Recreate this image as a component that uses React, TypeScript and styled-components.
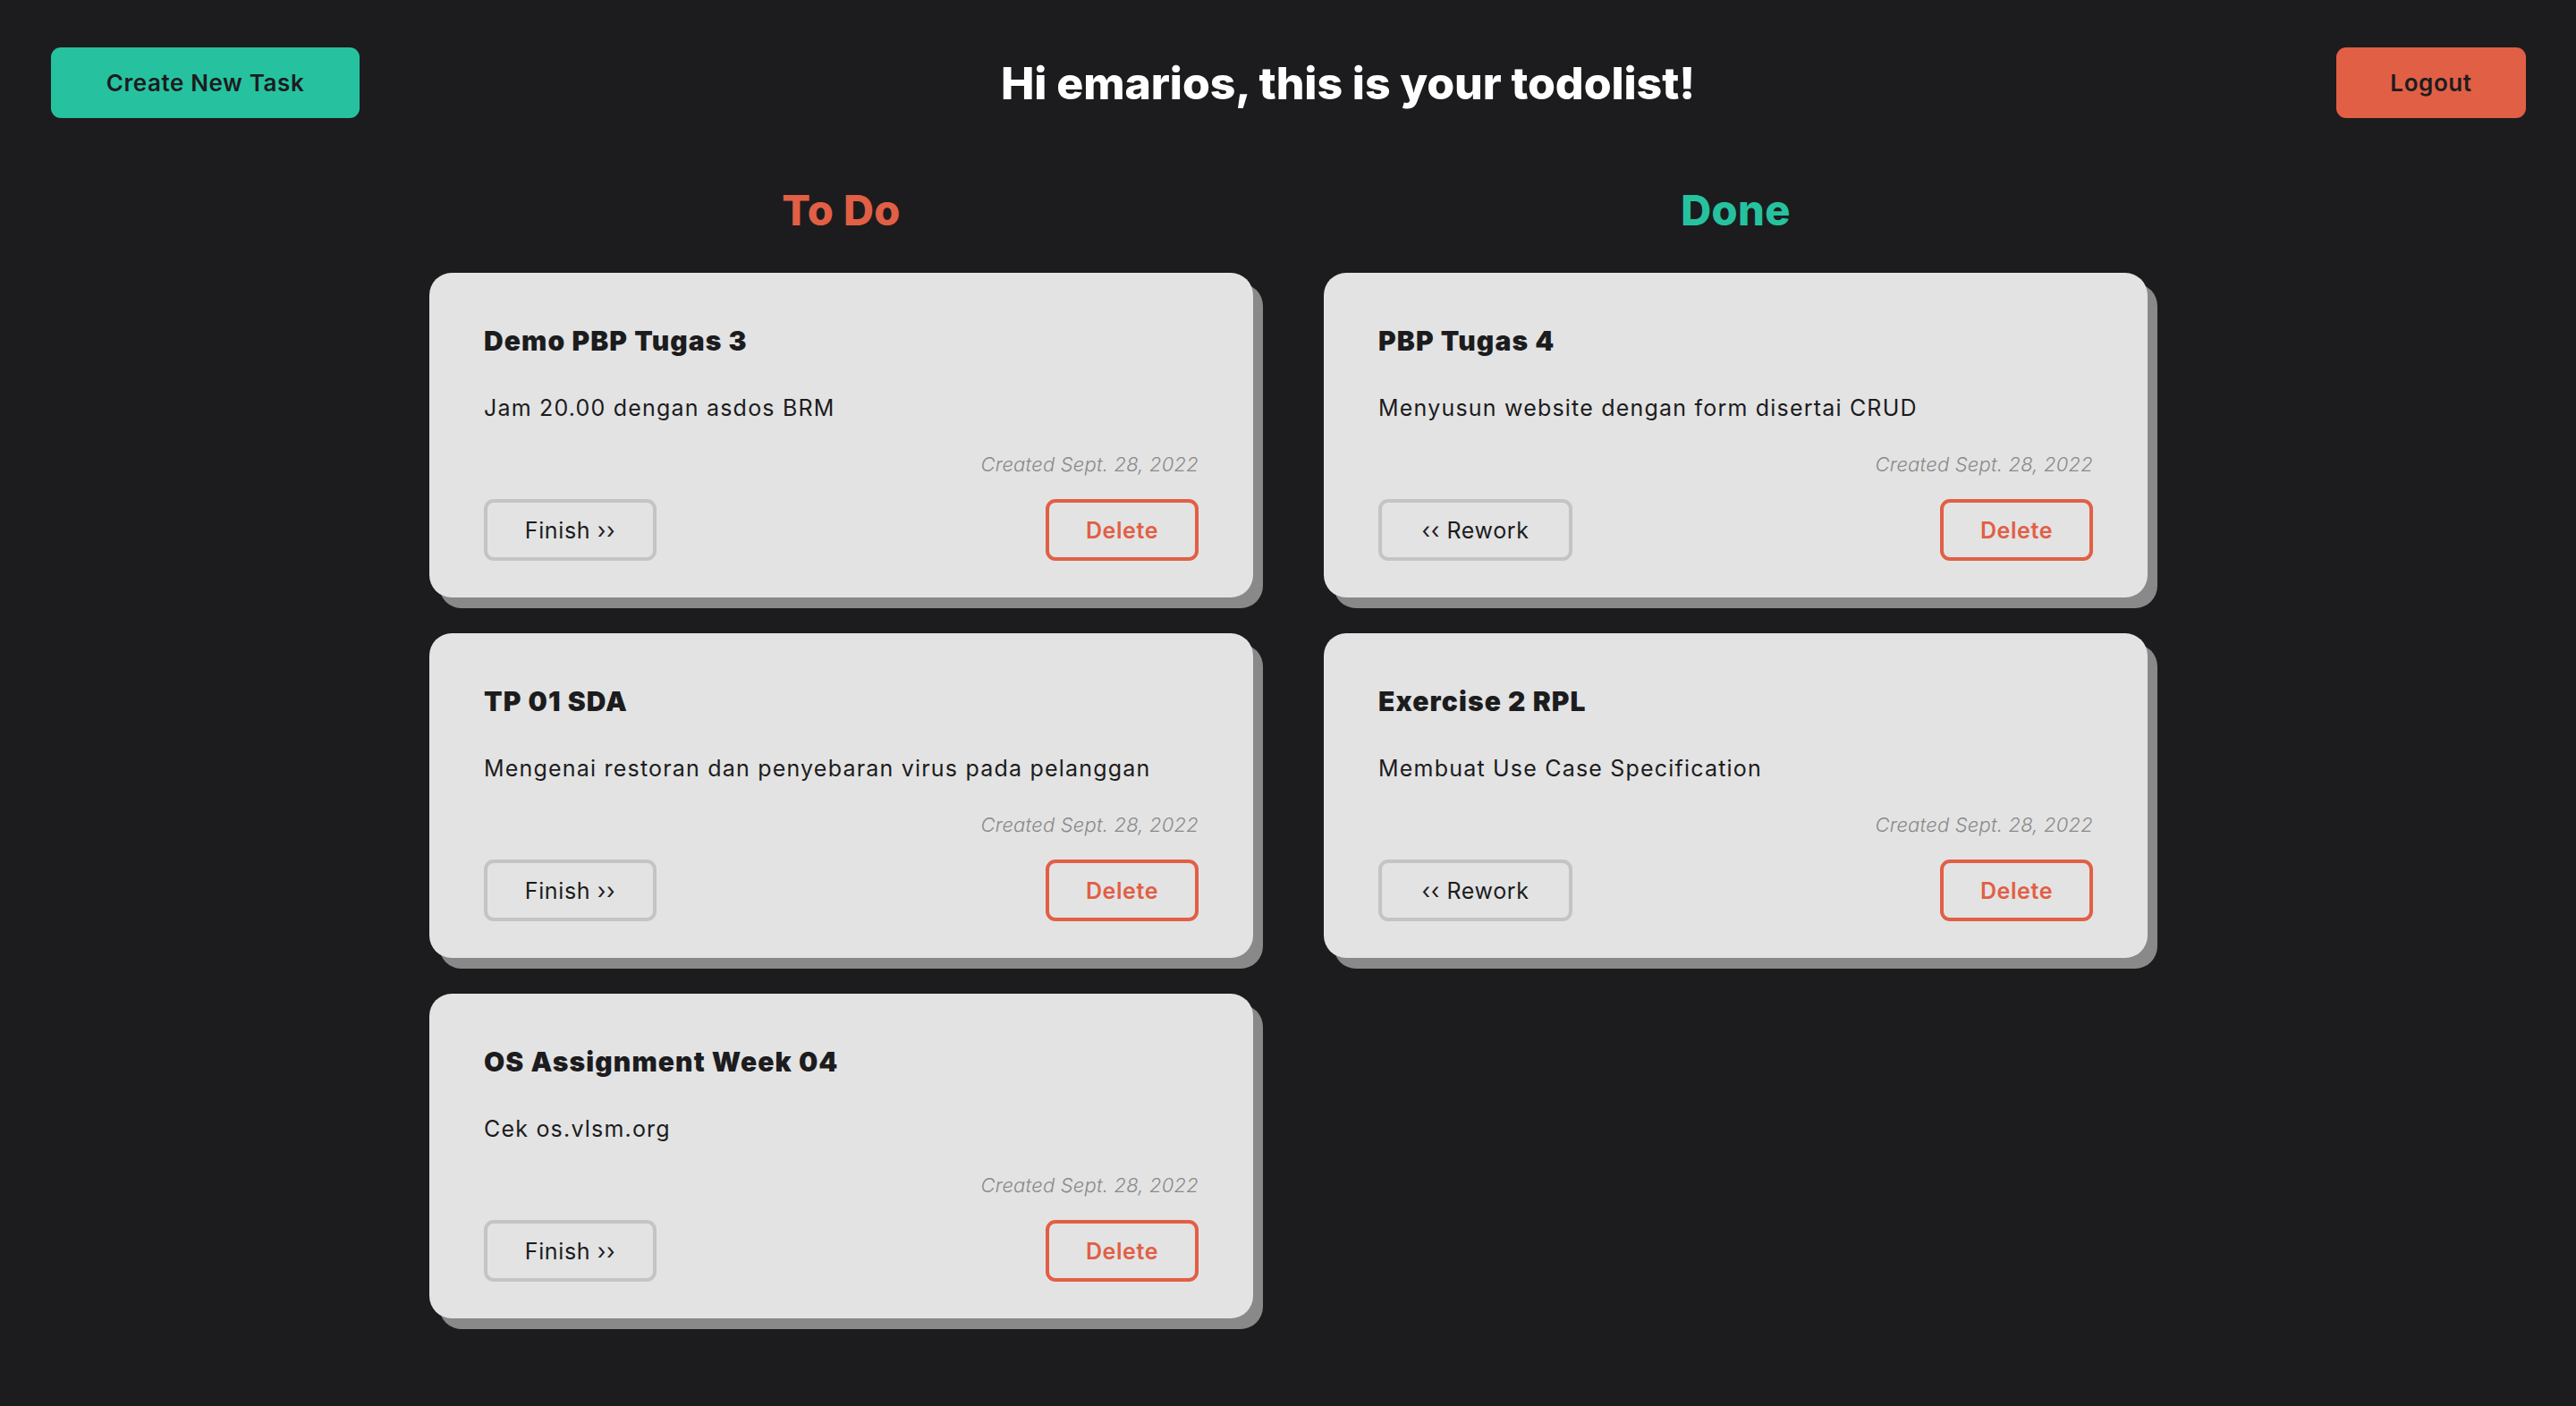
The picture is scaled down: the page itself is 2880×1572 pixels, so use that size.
import React from "react";
import styled, { createGlobalStyle } from "styled-components";

const GlobalStyle = createGlobalStyle`
  html, body {
    margin: 0;
    padding: 0;
    background: #1c1c1e;
  }
  body {
    font-family: "Inter", "Noto Sans", "Liberation Sans", sans-serif;
    color: #1c1c1e;
  }
  * { box-sizing: border-box; }
`;

const Page = styled.div`
  min-height: 1572px;
  padding: 53px 56px 60px 57px;
  background: #1c1c1e;
`;

const Header = styled.header`
  display: flex;
  align-items: center;
  justify-content: space-between;
`;

const HeaderButton = styled.button<{ $tone: "teal" | "red"; $width: number }>`
  width: ${(p) => p.$width}px;
  height: 79px;
  border: none;
  border-radius: 11px;
  background: ${(p) => (p.$tone === "teal" ? "#26c2a0" : "#e15f45")};
  color: #1c1c1e;
  font-family: inherit;
  font-size: 26px;
  font-weight: 600;
  letter-spacing: 0.6px;
  cursor: pointer;
`;

const Title = styled.h1`
  margin: 0;
  color: #ffffff;
  font-size: 50px;
  line-height: 60px;
  font-weight: 800;
  letter-spacing: -0.1px;
`;

const Board = styled.main`
  display: grid;
  grid-template-columns: 921px 921px;
  column-gap: 79px;
  justify-content: center;
  margin-top: 75px;
`;

const Column = styled.section`
  display: flex;
  flex-direction: column;
  gap: 42px;
`;

const ColumnTitle = styled.h2<{ $tone: "teal" | "red" }>`
  margin: 0;
  text-align: center;
  font-size: 47px;
  line-height: 56px;
  font-weight: 800;
  letter-spacing: 0.4px;
  color: ${(p) => (p.$tone === "teal" ? "#26c2a0" : "#e15f45")};
`;

const Cards = styled.div`
  display: flex;
  flex-direction: column;
  gap: 40px;
`;

const Card = styled.article`
  background: #e3e3e3;
  border-radius: 25px;
  box-shadow: 11px 12px 0 #898989;
  padding: 59px 61px 41px 61px;
  display: flex;
  flex-direction: column;
`;

const CardTitle = styled.h3`
  margin: 0;
  font-size: 30px;
  line-height: 35px;
  font-weight: 900;
  letter-spacing: 1.1px;
  color: #1c1c1e;
`;

const CardText = styled.p`
  margin: 42px 0 0;
  font-size: 25px;
  line-height: 30px;
  font-weight: 400;
  letter-spacing: 1.2px;
  color: #1c1c1e;
`;

const CardDate = styled.p`
  margin: 35px 0 0;
  text-align: right;
  font-size: 22px;
  line-height: 27px;
  font-style: italic;
  font-weight: 300;
  letter-spacing: 0.2px;
  color: #8a8a8a;
`;

const Actions = styled.div`
  margin-top: 25px;
  display: flex;
  justify-content: space-between;
  align-items: center;
`;

const ActionButton = styled.button<{ $variant: "move" | "delete"; $width: number }>`
  width: ${(p) => p.$width}px;
  height: 69px;
  border-radius: 11px;
  background: transparent;
  font-family: inherit;
  font-size: 25px;
  letter-spacing: 0.6px;
  cursor: pointer;
  border: 4px solid ${(p) => (p.$variant === "delete" ? "#e15f45" : "#c4c4c4")};
  color: ${(p) => (p.$variant === "delete" ? "#e15f45" : "#1c1c1e")};
  font-weight: ${(p) => (p.$variant === "delete" ? 600 : 400)};
`;

type Task = { title: string; desc: string; date: string };

const todo: Task[] = [
  { title: "Demo PBP Tugas 3", desc: "Jam 20.00 dengan asdos BRM", date: "Created Sept. 28, 2022" },
  { title: "TP 01 SDA", desc: "Mengenai restoran dan penyebaran virus pada pelanggan", date: "Created Sept. 28, 2022" },
  { title: "OS Assignment Week 04", desc: "Cek os.vlsm.org", date: "Created Sept. 28, 2022" },
];

const done: Task[] = [
  { title: "PBP Tugas 4", desc: "Menyusun website dengan form disertai CRUD", date: "Created Sept. 28, 2022" },
  { title: "Exercise 2 RPL", desc: "Membuat Use Case Specification", date: "Created Sept. 28, 2022" },
];

function TaskCard({ task, isDone }: { task: Task; isDone: boolean }) {
  return (
    <Card>
      <CardTitle>{task.title}</CardTitle>
      <CardText>{task.desc}</CardText>
      <CardDate>{task.date}</CardDate>
      <Actions>
        {isDone ? (
          <ActionButton $variant="move" $width={217}>
            {"\u2039\u2039 Rework"}
          </ActionButton>
        ) : (
          <ActionButton $variant="move" $width={193}>
            {"Finish \u203a\u203a"}
          </ActionButton>
        )}
        <ActionButton $variant="delete" $width={171}>
          Delete
        </ActionButton>
      </Actions>
    </Card>
  );
}

export default function App() {
  return (
    <>
      <GlobalStyle />
      <Page>
        <Header>
          <HeaderButton $tone="teal" $width={345}>
            Create New Task
          </HeaderButton>
          <Title>Hi emarios, this is your todolist!</Title>
          <HeaderButton $tone="red" $width={212}>
            Logout
          </HeaderButton>
        </Header>
        <Board>
          <Column>
            <ColumnTitle $tone="red">To Do</ColumnTitle>
            <Cards>
              {todo.map((t) => (
                <TaskCard key={t.title} task={t} isDone={false} />
              ))}
            </Cards>
          </Column>
          <Column>
            <ColumnTitle $tone="teal">Done</ColumnTitle>
            <Cards>
              {done.map((t) => (
                <TaskCard key={t.title} task={t} isDone={true} />
              ))}
            </Cards>
          </Column>
        </Board>
      </Page>
    </>
  );
}
